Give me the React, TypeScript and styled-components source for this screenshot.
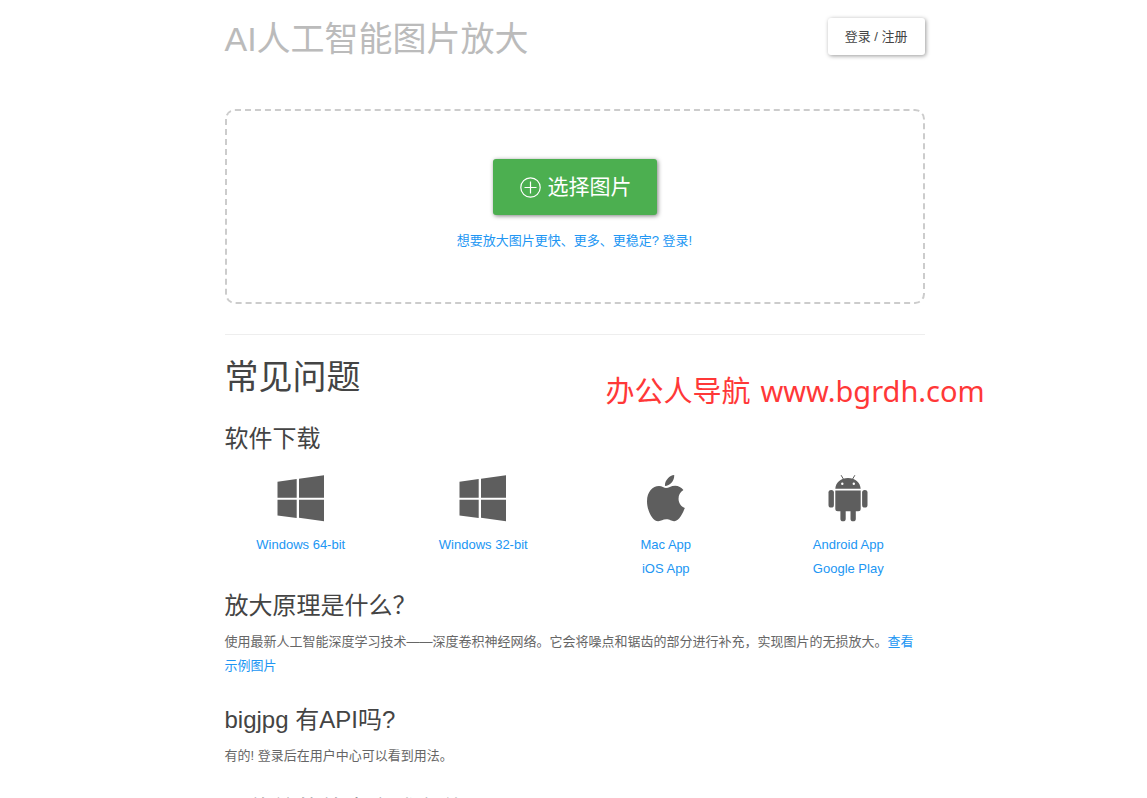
import React from 'react';
import styled, { createGlobalStyle } from 'styled-components';

const GlobalStyle = createGlobalStyle`
  * { box-sizing: border-box; }
  body {
    margin: 0;
    background: #fff;
    color: #666;
    font: 13px/24px "Liberation Sans", "Noto Sans CJK SC", sans-serif;
  }
`;

const Page = styled.div`
  position: relative;
  width: 100%;
  max-width: 702px;
  margin: 0 auto;
  padding-left: 2px;
`;

const Header = styled.header`
  display: flex;
  justify-content: space-between;
  align-items: flex-start;
  padding-top: 18px;
`;

const SiteTitle = styled.h1`
  margin: 0;
  font-size: 34px;
  line-height: 43px;
  font-weight: 400;
  color: #bbb;
`;

const LoginButton = styled.button`
  height: 37px;
  padding: 0 17px;
  border: 0;
  border-radius: 3px;
  background: #fff;
  color: #444;
  font: inherit;
  box-shadow: 1px 1px 4px rgba(0, 0, 0, 0.4);
`;

const DropZone = styled.section`
  display: flex;
  flex-direction: column;
  align-items: center;
  gap: 14px;
  margin-top: 48px;
  height: 195px;
  padding-top: 48px;
  border: 2px dashed #ccc;
  border-radius: 10px;
`;

const SelectButton = styled.button`
  display: flex;
  align-items: center;
  gap: 7px;
  height: 56px;
  padding: 0 25px 0 27px;
  border: 0;
  border-radius: 3px;
  background: #4caf50;
  color: #fff;
  font: inherit;
  font-size: 21px;
  box-shadow: 1px 1px 4px rgba(0, 0, 0, 0.5);
`;

const Link = styled.a`
  color: #2196f3;
  text-decoration: none;
`;

const Divider = styled.hr`
  margin: 30px 0 0;
  border: 0;
  border-top: 1px solid #eee;
`;

const FaqTitle = styled.h2`
  margin: 20px 0 0;
  font-size: 34px;
  line-height: 44px;
  font-weight: 400;
  color: #444;
`;

const Question = styled.h3`
  margin: 0;
  font-size: 24px;
  line-height: 32px;
  font-weight: 400;
  color: #444;
`;

const Downloads = styled.section`
  margin-top: 24px;
`;

const DownloadGrid = styled.div`
  display: grid;
  grid-template-columns: repeat(4, 1fr);
  column-gap: 30px;
  margin-top: 19px;
`;

const Download = styled.div`
  display: flex;
  flex-direction: column;
  align-items: center;

  svg {
    margin-bottom: 11px;
  }
`;

const Answer = styled.section`
  margin-top: 9px;

  & + & {
    margin-top: 26px;
  }

  p {
    margin: 8px 0 0;
  }
`;

const Watermark = styled.div`
  position: absolute;
  top: 369px;
  left: 383px;
  display: flex;
  gap: 10px;
  font: 29px/44px "Noto Sans", "Noto Sans CJK SC", sans-serif;
  white-space: nowrap;
  color: #ff3838;
`;

const WindowsIcon = () => (
  <svg width="48" height="48" viewBox="0 0 48 48" fill="#5e5e5e" aria-hidden="true">
    <path d="M.5 7.8 19.7 5.1v18.7H.5zM22 4.8 47 1.2v22.6H22zM.5 25.8h19.2v18.3L.5 41.4zM22 25.8h25v21.4L22 43.8z" />
  </svg>
);

const AppleIcon = () => (
  <svg width="48" height="48" viewBox="0 0 48 48" fill="#5e5e5e" aria-hidden="true">
    <path d="M32.2 1c.4 5.300-3.900 10.600-9.200 10.900C22.500 6.700 27.300 1.500 32.200 1zM24 14.100c2.300 0 5-2.300 9.200-2.300 3.200 0 6.300 1.600 8.200 4.300-7.200 4.400-6.100 14.800 1.400 17.800-1.500 4.500-5.600 13.100-10.500 13.300-3.100.1-4.200-1.900-8-1.900-3.700 0-5 1.800-8 1.900C10.500 47.400 5 36.600 5 27.200c0-9.600 5.800-15 12-15.100 2.900 0 5.300 2 7 2z" />
  </svg>
);

const AndroidIcon = () => (
  <svg width="48" height="48" viewBox="0 0 48 48" fill="#5e5e5e" aria-hidden="true">
    <path d="m17.100 1.200 2.500 4.200M30.900 1.200l-2.500 4.200" stroke="#5e5e5e" strokeWidth="1" />
    <path fillRule="evenodd" d="M11.300 14.800C11.800 8 17 3.900 24 3.900S36.200 8 36.700 14.800zM18.300 8.500a1.200 1.200 0 1 0 0 2.400 1.200 1.200 0 0 0 0-2.400zM29.800 8.500a1.200 1.200 0 1 0 0 2.400 1.200 1.200 0 0 0 0-2.400z" />
    <path d="M11.300 16.500h25.400v18.300a2.500 2.500 0 0 1-2.500 2.500h-2.400v7.400a2.500 2.500 0 0 1-5.300 0v-7.400h-4.800v7.400a2.500 2.500 0 0 1-5.300 0v-7.400h-2.600a2.500 2.500 0 0 1-2.500-2.500z" />
    <rect x="4.500" y="16" width="5.400" height="17.600" rx="2.600" />
    <rect x="38.100" y="16" width="5.400" height="17.600" rx="2.600" />
  </svg>
);

const PlusIcon = () => (
  <svg width="21" height="21" viewBox="0 0 21 21" fill="none" stroke="#fff" strokeWidth="1.200" aria-hidden="true">
    <circle cx="10.500" cy="10.500" r="9.700" />
    <path d="M10.500 4.500v12M4.500 10.500h12" />
  </svg>
);

const downloads = [
  { Icon: WindowsIcon, links: ['Windows 64-bit'] },
  { Icon: WindowsIcon, links: ['Windows 32-bit'] },
  { Icon: AppleIcon, links: ['Mac App', 'iOS App'] },
  { Icon: AndroidIcon, links: ['Android App', 'Google Play'] },
];

export default function App() {
  return (
    <>
      <GlobalStyle />
      <Page lang="zh-CN">
        <Header>
          <SiteTitle>AI人工智能图片放大</SiteTitle>
          <LoginButton type="button">登录 / 注册</LoginButton>
        </Header>
        <DropZone>
          <SelectButton type="button">
            <PlusIcon />
            选择图片
          </SelectButton>
          <Link href="#login">想要放大图片更快、更多、更稳定? 登录!</Link>
        </DropZone>
        <Divider />
        <main>
          <FaqTitle>常见问题</FaqTitle>
          <Downloads>
            <Question>软件下载</Question>
            <DownloadGrid>
              {downloads.map(({ Icon, links }) => (
                <Download key={links[0]}>
                  <Icon />
                  {links.map((label) => (
                    <Link key={label} href="#download">{label}</Link>
                  ))}
                </Download>
              ))}
            </DownloadGrid>
          </Downloads>
          <Answer>
            <Question>放大原理是什么？</Question>
            <p>
              使用最新人工智能深度学习技术——深度卷积神经网络。它会将噪点和锯齿的部分进行补充，实现图片的无损放大。
              <Link href="#samples">查看示例图片</Link>
            </p>
          </Answer>
          <Answer>
            <Question>bigjpg 有API吗?</Question>
            <p>有的! 登录后在用户中心可以看到用法。</p>
          </Answer>
          <Answer>
            <Question>与传统的放大方式有什么不同?</Question>
          </Answer>
        </main>
        <Watermark>
          <span>办公人导航</span>
          <span>www.bgrdh.com</span>
        </Watermark>
      </Page>
    </>
  );
}
